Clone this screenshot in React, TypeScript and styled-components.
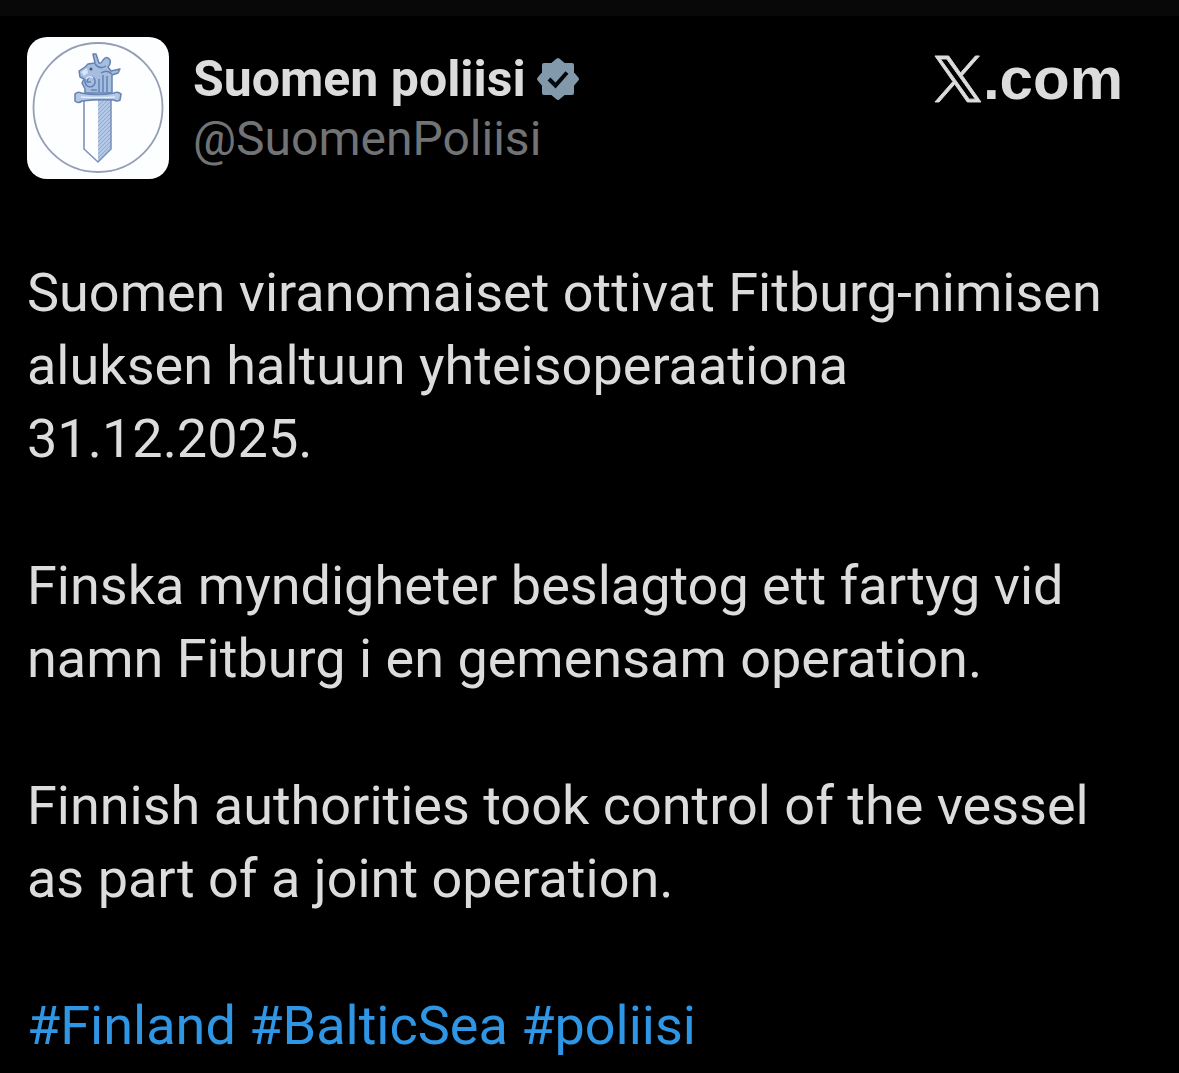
import styled, { createGlobalStyle } from "styled-components";

const GlobalStyle = createGlobalStyle`
  body {
    margin: 0;
    background: #000;
    color: #dcdcdc;
    font-family: Roboto, "Liberation Sans", sans-serif;
  }
`;

const TopStrip = styled.div`
  height: 16px;
  background: #080808;
`;

const Post = styled.article`
  padding: 21px 56px 8px 27px;
`;

const Header = styled.header`
  display: flex;
  align-items: flex-start;
  gap: 24px;
  margin-bottom: 77px;
`;

const Avatar = styled.svg`
  display: block;
  flex: none;
  width: 142px;
  height: 142px;
  border-radius: 20px;
  background: #fdfeff;
`;

const Author = styled.div`
  flex: 1;
  min-width: 0;
  padding-top: 12px;
`;

const NameRow = styled.div`
  display: flex;
  align-items: center;
  gap: 10px;
`;

const Name = styled.a`
  color: inherit;
  text-decoration: none;
  font-size: 50px;
  line-height: 60px;
  font-weight: 700;
`;

const Badge = styled.svg`
  width: 44px;
  height: 44px;
`;

const Handle = styled.a`
  display: block;
  color: #717375;
  text-decoration: none;
  font-size: 48px;
  line-height: 60px;
`;

const Brand = styled.a`
  display: flex;
  align-items: center;
  gap: 1px;
  padding-top: 12px;
  color: inherit;
  text-decoration: none;
  font-family: "Liberation Sans", Arial, sans-serif;
  font-size: 60px;
  line-height: 60px;
  font-weight: 700;
`;

const BrandMark = styled.svg`
  width: 48px;
  height: 48px;
`;

const Paragraph = styled.p`
  margin: 0 0 74px;
  font-size: 54px;
  line-height: 73px;
`;

const Tags = styled(Paragraph)`
  margin: 0;
`;

const Tag = styled.a`
  color: #2f96e6;
  text-decoration: none;
`;

const tags = ["Finland", "BalticSea", "poliisi"];

function SwordEmblem() {
  return (
    <Avatar viewBox="0 0 142 142" role="img" aria-label="Suomen poliisi">
      <defs>
        <pattern id="hatch" width="4" height="4" patternUnits="userSpaceOnUse">
          <rect width="4" height="4" fill="#b3c8e6" />
          <path d="M0 4L4 0" stroke="#8fabd3" strokeWidth="1" />
        </pattern>
      </defs>
      <circle cx="71" cy="70.500" r="64.500" fill="none" stroke="#959fb4" strokeWidth="1.800" />
      <path d="M71 63H84V112L71 125Z" fill="url(#hatch)" />
      <path d="M57 63V112L71 125L84 112V63" fill="none" stroke="#7f92b8" strokeWidth="1.600" />
      <path
        d="M58 56L58 52L55 46L57 42L53 40L52 34L58 30L61 27L68 26L66 17L69 17L72 26Q74 27 76 23Q80 18 83 23Q84 27 81 30L84 34L93 32L91 36L85 38L85 56Z"
        fill="#a5bddf"
        stroke="#6682b2"
        strokeWidth="1.500"
        strokeLinejoin="round"
      />
      <path
        d="M58 42Q57 49 63 50Q69 49 68 43Q66 38 61 41L60 45L64 45M68 27Q73 33 79 29M74 36Q80 32 85 37M72 42V55M76 38V55M80 39V55M64 53H70"
        fill="none"
        stroke="#6682b4"
        strokeWidth="1.500"
      />
      <path d="M54 35L60 31L61 36L57 39Z" fill="#d7e4f5" />
      <path d="M59 42Q62 38 66 41" fill="none" stroke="#e3edfa" strokeWidth="1.500" />
      <circle cx="64" cy="32" r="1.500" fill="#40598a" />
      <path
        d="M48 57Q51 54 54 56Q71 59 87 56Q91 54 94 57L93 63Q90 65 87 63Q71 62 55 64Q51 67 48 64Z"
        fill="#b3c8e6"
        stroke="#6a83b0"
        strokeWidth="1.600"
      />
      <path d="M54 60Q71 61 88 60" fill="none" stroke="#e3edfa" strokeWidth="1.500" />
    </Avatar>
  );
}

function VerifiedBadge() {
  return (
    <Badge viewBox="0 0 44 44" role="img" aria-label="Verified account">
      <path
        d="M22 3L28 8H36V16L41 22L36 28V36H28L22 41L16 36H8V28L3 22L8 16V8H16Z"
        fill="#8299ab"
        stroke="#8299ab"
        strokeWidth="4"
        strokeLinejoin="round"
      />
      <path d="M13 22L19.500 28.500L31 15.500" fill="none" stroke="#03080d" strokeWidth="4" />
    </Badge>
  );
}

export default function App() {
  return (
    <>
      <GlobalStyle />
      <TopStrip />
      <Post>
        <Header>
          <SwordEmblem />
          <Author>
            <NameRow>
              <Name href="#profile">Suomen poliisi</Name>
              <VerifiedBadge />
            </NameRow>
            <Handle href="#profile">@SuomenPoliisi</Handle>
          </Author>
          <Brand href="#home" aria-label="X.com">
            <BrandMark viewBox="-0.500 -0.500 25 25" aria-hidden="true">
              <path
                fill="currentColor"
                stroke="currentColor"
                strokeWidth="0.500"
                d="M14.258 10.152L23.176 0h-2.113l-7.747 8.813L7.133 0H0l9.352 13.328L0 23.973h2.113l8.176-9.309 6.531 9.309h7.133zm-2.895 3.293l-.949-1.328L2.875 1.560h3.246l6.086 8.523.945 1.328 7.910 11.078h-3.246z"
              />
            </BrandMark>
            .com
          </Brand>
        </Header>
        <Paragraph lang="fi">
          Suomen viranomaiset ottivat Fitburg-nimisen aluksen haltuun yhteisoperaationa 31.12.2025.
        </Paragraph>
        <Paragraph lang="sv">
          Finska myndigheter beslagtog ett fartyg vid namn Fitburg i en gemensam operation.
        </Paragraph>
        <Paragraph lang="en">
          Finnish authorities took control of the vessel as part of a joint operation.
        </Paragraph>
        <Tags>
          {tags.map((tag, i) => (
            <span key={tag}>
              {i > 0 && " "}
              <Tag href={`#${tag}`}>#{tag}</Tag>
            </span>
          ))}
        </Tags>
      </Post>
    </>
  );
}
